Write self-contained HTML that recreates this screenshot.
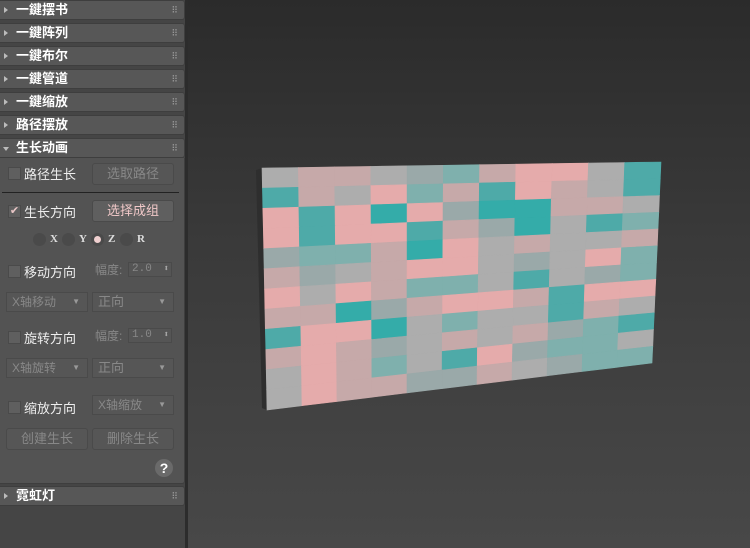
<!DOCTYPE html>
<html><head><meta charset="utf-8"><style>
*{margin:0;padding:0;box-sizing:border-box}
body{width:750px;height:548px;overflow:hidden;background:#444;font-family:"Liberation Sans","Noto Sans CJK SC",sans-serif;position:relative}
#side{position:absolute;left:0;top:0;width:188px;height:548px;background:#454545}
#vp{position:absolute;left:188px;top:0;width:562px;height:548px;background:linear-gradient(#2b2b2b,#3a3a3a 45%,#484848)}
#gap{position:absolute;left:185px;top:0;width:4px;height:548px;background:#2c2c2c}
.hd{position:absolute;left:0;width:185px;height:20px;background:#575757;border:1px solid #3e3e3e;border-left:none;border-radius:0 3px 3px 0;color:#fff;font-weight:bold;font-size:13px;line-height:18px;padding-left:16px}
.hd:before{content:"";position:absolute;left:4px;top:6px;border-left:4px solid #bbb;border-top:3px solid transparent;border-bottom:3px solid transparent}
.hd.open:before{left:3px;top:8px;border-top:4px solid #bbb;border-left:3px solid transparent;border-right:3px solid transparent;border-bottom:none}
.hd:after{content:"⠿";position:absolute;right:6px;top:0;font-size:9px;color:#999;font-weight:normal}
#body{position:absolute;left:0;top:158px;width:185px;height:326px;background:#535353;border:1px solid #3e3e3e;border-top:none;border-left:none;border-radius:0 0 3px 0}
.t{position:absolute;font-size:13px;color:#eee;white-space:nowrap}
.cb{position:absolute;width:13px;height:13px;background:#5f5f5f;border:1px solid #4a4a4a}
.btn{position:absolute;height:22px;border:1px solid #4a4a4a;border-radius:3px;background:#565656;color:#888;font-size:13px;text-align:center;line-height:20px}
.dd{position:absolute;height:20px;border:1px solid #4a4a4a;background:#565656;color:#888;font-size:12px;line-height:18px;padding-left:5px}
.dd:after{content:"▼";position:absolute;right:7px;top:0;font-size:8px;color:#999}
.sp{position:absolute;height:15px;border:1px solid #4a4a4a;background:#555;color:#888;font-size:11px;line-height:13px;padding-left:3px;width:44px;font-family:"Liberation Mono",monospace}
.sp:after{content:"⬍";position:absolute;right:2px;top:0;font-size:9px;color:#aaa}
.rd{position:absolute;width:13px;height:13px;border-radius:50%;background:#4a4a4a}
.rl{position:absolute;font-size:11px;color:#ddd;font-weight:bold;font-family:"Liberation Serif",serif}
</style></head><body>
<div id="side">
<div class="hd" style="top:0">一鍵摆书</div>
<div class="hd" style="top:23px">一鍵阵列</div>
<div class="hd" style="top:46px">一鍵布尔</div>
<div class="hd" style="top:69px">一鍵管道</div>
<div class="hd" style="top:92px">一鍵缩放</div>
<div class="hd" style="top:115px">路径摆放</div>
<div class="hd open" style="top:138px">生长动画</div>
<div id="body"></div>
<div class="cb" style="left:8px;top:167px"></div><div class="t" style="left:24px;top:164px">路径生长</div>
<div class="btn" style="left:92px;top:163px;width:82px">选取路径</div>
<div style="position:absolute;left:2px;top:192px;width:177px;height:1px;background:#222"></div>
<div class="cb" style="left:8px;top:205px;color:#e9c6c6;font-size:11px;line-height:11px;text-align:center">✔</div><div class="t" style="left:24px;top:202px">生长方向</div>
<div class="btn" style="left:92px;top:200px;width:82px;background:#5f5f5f;color:#f0c8c8">选择成组</div>
<div class="rd" style="left:33px;top:233px"></div><div class="rl" style="left:50px;top:233px">X</div>
<div class="rd" style="left:62px;top:233px"></div><div class="rl" style="left:79px;top:233px">Y</div>
<div class="rd" style="left:91px;top:233px;background:#4a4a4a"><div style="position:absolute;left:3px;top:3px;width:7px;height:7px;border-radius:50%;background:#f0d0d0"></div></div><div class="rl" style="left:108px;top:233px">Z</div>
<div class="rd" style="left:120px;top:233px"></div><div class="rl" style="left:137px;top:233px">R</div>
<div class="cb" style="left:8px;top:265px"></div><div class="t" style="left:24px;top:262px">移动方向</div>
<div class="t" style="left:95px;top:261px;color:#888;font-size:12px">幅度:</div><div class="sp" style="left:128px;top:262px">2.0</div>
<div class="dd" style="left:6px;top:292px;width:82px">X轴移动</div><div class="dd" style="left:92px;top:292px;width:82px;font-size:13px">正向</div>
<div class="cb" style="left:8px;top:331px"></div><div class="t" style="left:24px;top:328px">旋转方向</div>
<div class="t" style="left:95px;top:327px;color:#888;font-size:12px">幅度:</div><div class="sp" style="left:128px;top:328px">1.0</div>
<div class="dd" style="left:6px;top:358px;width:82px">X轴旋转</div><div class="dd" style="left:92px;top:358px;width:82px;font-size:13px">正向</div>
<div class="cb" style="left:8px;top:401px"></div><div class="t" style="left:24px;top:398px">缩放方向</div>
<div class="dd" style="left:92px;top:395px;width:82px">X轴缩放</div>
<div class="btn" style="left:6px;top:428px;width:82px">创建生长</div>
<div class="btn" style="left:92px;top:428px;width:82px">删除生长</div>
<div style="position:absolute;left:155px;top:459px;width:18px;height:18px;border-radius:50%;background:#6a6a6a;color:#fff;font-weight:bold;font-size:14px;text-align:center;line-height:18px">?</div>
<div class="hd" style="top:486px">霓虹灯</div>
</div>
<div id="gap"></div>
<div id="vp"></div>
<svg id="wall" width="750" height="548" style="position:absolute;left:0;top:0">
<polygon points="256,170 262,168 267,410 262,408" fill="#2e2e2e"/>
<g id="cells"></g>
</svg>
<script>
var C={a:"#adadad",p:"#c6a9a9",k:"#e5abab",t:"#4eaaa8",d:"#34aca9",g:"#7fb0ad",l:"#9aa9a9"};
var R=["appalgpkkat","tpakgptkpat","ktkdklddppa","ktkktpldatg","lggpdkapaap","plapkkalakg","kakpggatalg","ppdlpkkptkk","tkkdagaatpa","pkplapaplgt","akpgatklgg","akppllpalgg"];
var TL=[262,168],TR=[661,162],BR=[652,363],BL=[267,410];
function P(u,v){var x=(1-v)*((1-u)*TL[0]+u*TR[0])+v*((1-u)*BL[0]+u*BR[0]);var y=(1-v)*((1-u)*TL[1]+u*TR[1])+v*((1-u)*BL[1]+u*BR[1]);return x.toFixed(1)+","+y.toFixed(1);}
var s="",nr=R.length,nc=11;
for(var r=0;r<nr;r++)for(var c=0;c<nc;c++){var u0=c/nc,u1=(c+1)/nc,v0=r/nr,v1=(r+1)/nr;
s+='<polygon fill="'+C[R[r][c]||"a"]+'" stroke="'+C[R[r][c]||"a"]+'" stroke-width="0.6" points="'+P(u0,v0)+" "+P(u1,v0)+" "+P(u1,v1)+" "+P(u0,v1)+'"/>';}
document.getElementById("cells").innerHTML=s;
</script>
</body></html>
